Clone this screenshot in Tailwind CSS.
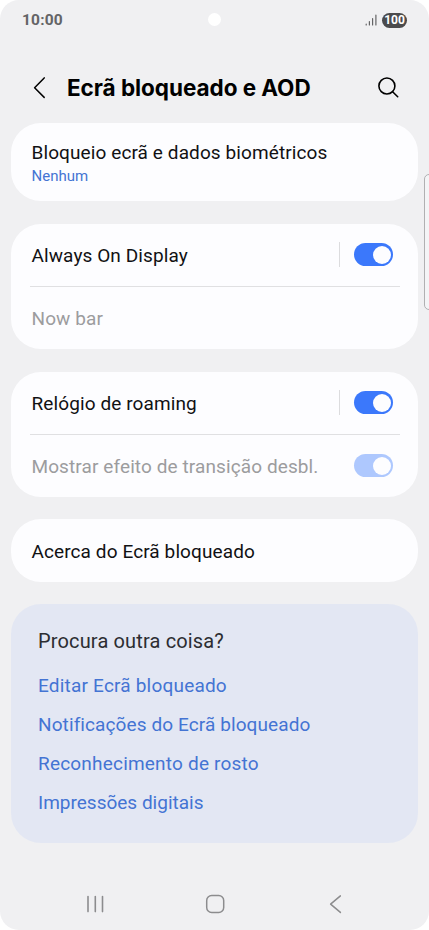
<!DOCTYPE html>
<html lang="pt">
<head>
  <meta charset="UTF-8">
  <meta name="viewport" content="width=device-width, initial-scale=1.0">
  <title>Ecrã bloqueado e AOD</title>
  <script src="https://cdn.jsdelivr.net/npm/@tailwindcss/browser@4"></script>
</head>
<body class="bg-white font-['Roboto','Liberation_Sans',sans-serif]">
  <div class="relative w-[429px] h-[930px] bg-[#f0f0f2] rounded-[19px] overflow-hidden flex flex-col whitespace-nowrap">

    <!-- Barra de estado -->
    <div class="relative h-10 shrink-0 flex items-center justify-between pl-[22px] pr-[22px]">
      <span class="pt-[2px] text-[15.5px] font-bold tracking-[0.2px] text-[#646466]">10:00</span>
      <span class="absolute left-[208px] top-[13px] size-[13px] rounded-full bg-white"></span>
      <div class="flex items-center gap-[5px]">
        <svg class="w-3 h-3" viewBox="0 0 12 12" fill="none" stroke="#646466" stroke-width="1.2" stroke-linecap="round">
          <path d="M1.2 10.2v.8M4.4 7.6V11M7.6 4.6V11M10.9 1V11"/>
        </svg>
        <span class="w-[25px] h-[15px] rounded-full bg-[#4b4b4d] text-white text-[12px] leading-[15px] font-bold text-center">100</span>
      </div>
    </div>

    <!-- Cabeçalho -->
    <header class="h-[83px] pt-[13px] shrink-0 flex items-center pl-[32px] pr-[29px]">
      <svg class="w-4 h-6" viewBox="0 0 16 24" fill="none" stroke="#000" stroke-width="1.5" stroke-linecap="round" stroke-linejoin="round">
        <path d="M12.2 1.9 2.6 11.7l9.6 9.7"/>
      </svg>
      <h1 class="ml-[19px] pb-px flex-1 text-[22.5px] font-bold tracking-[-0.05px] font-['Inter','Roboto',sans-serif] text-black">Ecrã bloqueado e AOD</h1>
      <svg class="size-6" viewBox="0 0 24 24" fill="none" stroke="#000" stroke-width="1.6" stroke-linecap="round">
        <circle cx="10.9" cy="10" r="8"/>
        <path d="m16.6 15.7 5.1 5"/>
      </svg>
    </header>

    <!-- Definições -->
    <main class="ml-[11px] w-[407px] flex flex-col text-[19px] tracking-[0.1px] text-[#111113]">
      <section class="h-[78px] rounded-[30px] bg-[#fdfdff] pl-[20.5px] pt-[18px]">
        <p class="leading-6">Bloqueio ecrã e dados biométricos</p>
        <p class="text-[15px] leading-[22px] tracking-normal text-[#4474d3]">Nenhum</p>
      </section>

      <section class="mt-[22.5px] h-[125.5px] rounded-[30px] bg-[#fdfdff] px-[19px]">
        <div class="h-[62px] flex items-center pl-[1.5px] pr-[6px]">
          <span class="flex-1 pt-[3px]">Always On Display</span>
          <span class="w-px h-[25px] bg-[#dcdcde] mr-[14px]"></span>
          <span class="w-[39px] h-[23px] rounded-full bg-[#3b78fb] flex items-center justify-end pr-[2px]">
            <span class="size-[18px] rounded-full bg-[#fdfdff]"></span>
          </span>
        </div>
        <div class="h-px bg-[#e0e0e2] -mr-[1px]"></div>
        <div class="h-[62px] flex items-center pl-[1.5px] pt-[4px] text-[#9c9c9e]">Now bar</div>
      </section>

      <section class="mt-[22.5px] h-[125.5px] rounded-[30px] bg-[#fdfdff] px-[19px]">
        <div class="h-[62px] flex items-center pl-[1.5px] pr-[6px]">
          <span class="flex-1 pt-[3px]">Relógio de roaming</span>
          <span class="w-px h-[25px] bg-[#dcdcde] mr-[14px]"></span>
          <span class="w-[39px] h-[23px] rounded-full bg-[#3b78fb] flex items-center justify-end pr-[2px]">
            <span class="size-[18px] rounded-full bg-[#fdfdff]"></span>
          </span>
        </div>
        <div class="h-px bg-[#e0e0e2] -mr-[1px]"></div>
        <div class="h-[62px] flex items-center pl-[1.5px] pr-[6px] text-[#9c9c9e]">
          <span class="flex-1 pt-[4px]">Mostrar efeito de transição desbl.</span>
          <span class="w-[39px] h-[23px] rounded-full bg-[#aec8fe] flex items-center justify-end pr-[2px]">
            <span class="size-[18px] rounded-full bg-[#fdfdff]"></span>
          </span>
        </div>
      </section>

      <section class="mt-[22px] h-[63px] rounded-[30px] bg-[#fdfdff] pl-[20.5px] pt-[3px] flex items-center">Acerca do Ecrã bloqueado</section>

      <!-- Sugestões -->
      <section class="mt-[22px] h-[239px] rounded-[30px] bg-[#e3e7f3] pl-[27px] pt-[17px] text-[#4474d3]">
        <h2 class="h-10 leading-10 text-[20px] tracking-[0.15px] text-[#2c2d31]">Procura outra coisa?</h2>
        <ul class="mt-[5px] leading-[39px]">
          <li class="tracking-[0.2px]">Editar Ecrã bloqueado</li>
          <li>Notificações do Ecrã bloqueado</li>
          <li class="tracking-[0.2px]">Reconhecimento de rosto</li>
          <li class="tracking-normal">Impressões digitais</li>
        </ul>
      </section>
    </main>

    <!-- Barra de navegação -->
    <nav class="mt-auto h-[52px] shrink-0 flex items-center justify-between pl-[83px] pr-[82px]">
      <svg class="size-6" viewBox="0 0 24 24" fill="none" stroke="#8c8c8e" stroke-width="1.6" stroke-linecap="round">
        <path d="M5 4.6v15M12.3 4.6v15M19.5 4.6v15"/>
      </svg>
      <svg class="size-6" viewBox="0 0 24 24" fill="none" stroke="#8c8c8e" stroke-width="1.5">
        <rect x="3.7" y="3.6" width="17" height="16.8" rx="5"/>
      </svg>
      <svg class="size-6" viewBox="0 0 24 24" fill="none" stroke="#8c8c8e" stroke-width="1.5" stroke-linecap="round" stroke-linejoin="round">
        <path d="M17.4 3.9 7.6 12.1l9.8 8.3"/>
      </svg>
    </nav>

    <!-- Pega do painel lateral -->
    <div class="absolute left-[424px] top-[174px] w-[12px] h-[136px] rounded-[5px] border border-[#b0b0b2] bg-[#f4f4f6]"></div>
  </div>
</body>
</html>
